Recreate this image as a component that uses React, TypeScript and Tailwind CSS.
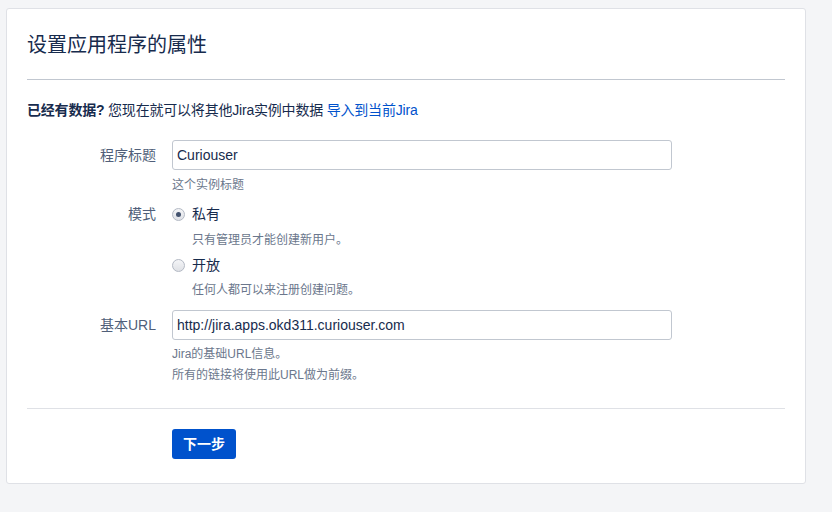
const font = { fontFamily: '"Liberation Sans", "Noto Sans CJK SC", sans-serif' };

const Radio = ({ checked }: { checked?: boolean }) => (
  <span className="flex h-[13px] w-[13px] items-center justify-center rounded-full border border-[#b3b9c4] bg-gradient-to-b from-[#f4f5f7] to-[#dfe1e6]">
    {checked && <span className="h-[5px] w-[5px] rounded-full bg-[#42526e]" />}
  </span>
);

const App = () => {
  return (
    <div className="min-h-[512px] w-[832px] bg-[#f4f5f7] pt-2 pl-[6px]" style={font}>
      <div className="w-[800px] rounded-[3px] border border-[#dfe1e6] bg-white px-5 pt-[22px] pb-6 text-[#172b4d]">
        {/* 标题 */}
        <h1 className="text-[20px] leading-[28px] font-normal">设置应用程序的属性</h1>
        <div className="mt-[20px] h-px bg-[#c1c7d0]" />

        <p className="mt-5 text-[14px] leading-5 tracking-[-0.2px]">
          <span className="font-bold">已经有数据?</span> 您现在就可以将其他Jira实例中数据{" "}
          <a className="text-[#0052cc]">导入到当前Jira</a>
        </p>

        {/* 表单 */}
        <div className="mt-5 grid grid-cols-[129px_1fr] gap-x-4 text-[14px]">
          <label className="pt-[5px] text-right leading-5 text-[#505f79]">程序标题</label>
          <div>
            <div className="flex h-[30px] w-[500px] items-center rounded-[3px] border border-[#c1c7d0] px-[4px] leading-5">
              Curiouser
            </div>
            <p className="mt-[5px] text-[12px] leading-5 text-[#6b778c]">这个实例标题</p>
          </div>

          <label className="mt-[9px] text-right leading-5 text-[#505f79]">模式</label>
          <div className="mt-[9px]">
            <div className="flex h-5 items-center gap-[7px]">
              <Radio checked />
              <span>私有</span>
            </div>
            <p className="mt-[6px] pl-5 text-[12px] leading-5 text-[#6b778c]">只有管理员才能创建新用户。</p>
            <div className="mt-[5px] flex h-5 items-center gap-[7px]">
              <Radio />
              <span>开放</span>
            </div>
            <p className="mt-[5px] pl-5 text-[12px] leading-5 text-[#6b778c]">任何人都可以来注册创建问题。</p>
          </div>

          <label className="mt-[10px] pt-[5px] text-right leading-5 text-[#505f79]">基本URL</label>
          <div className="mt-[10px]">
            <div className="flex h-[30px] w-[500px] items-center rounded-[3px] border border-[#c1c7d0] px-[4px] leading-5">
              http://jira.apps.okd311.curiouser.com
            </div>
            <p className="mt-1 text-[12px] leading-[21px] text-[#6b778c]">Jira的基础URL信息。</p>
            <p className="text-[12px] leading-[21px] text-[#6b778c]">所有的链接将使用此URL做为前缀。</p>
          </div>
        </div>

        <div className="mt-[22px] h-px bg-[#dfe1e6]" />

        <div className="mt-5 pl-[145px]">
          <button className="h-[30px] rounded-[3px] bg-[#0052cc] px-[11px] text-[14px] font-bold text-white">
            下一步
          </button>
        </div>
      </div>
    </div>
  );
};

export default App;
